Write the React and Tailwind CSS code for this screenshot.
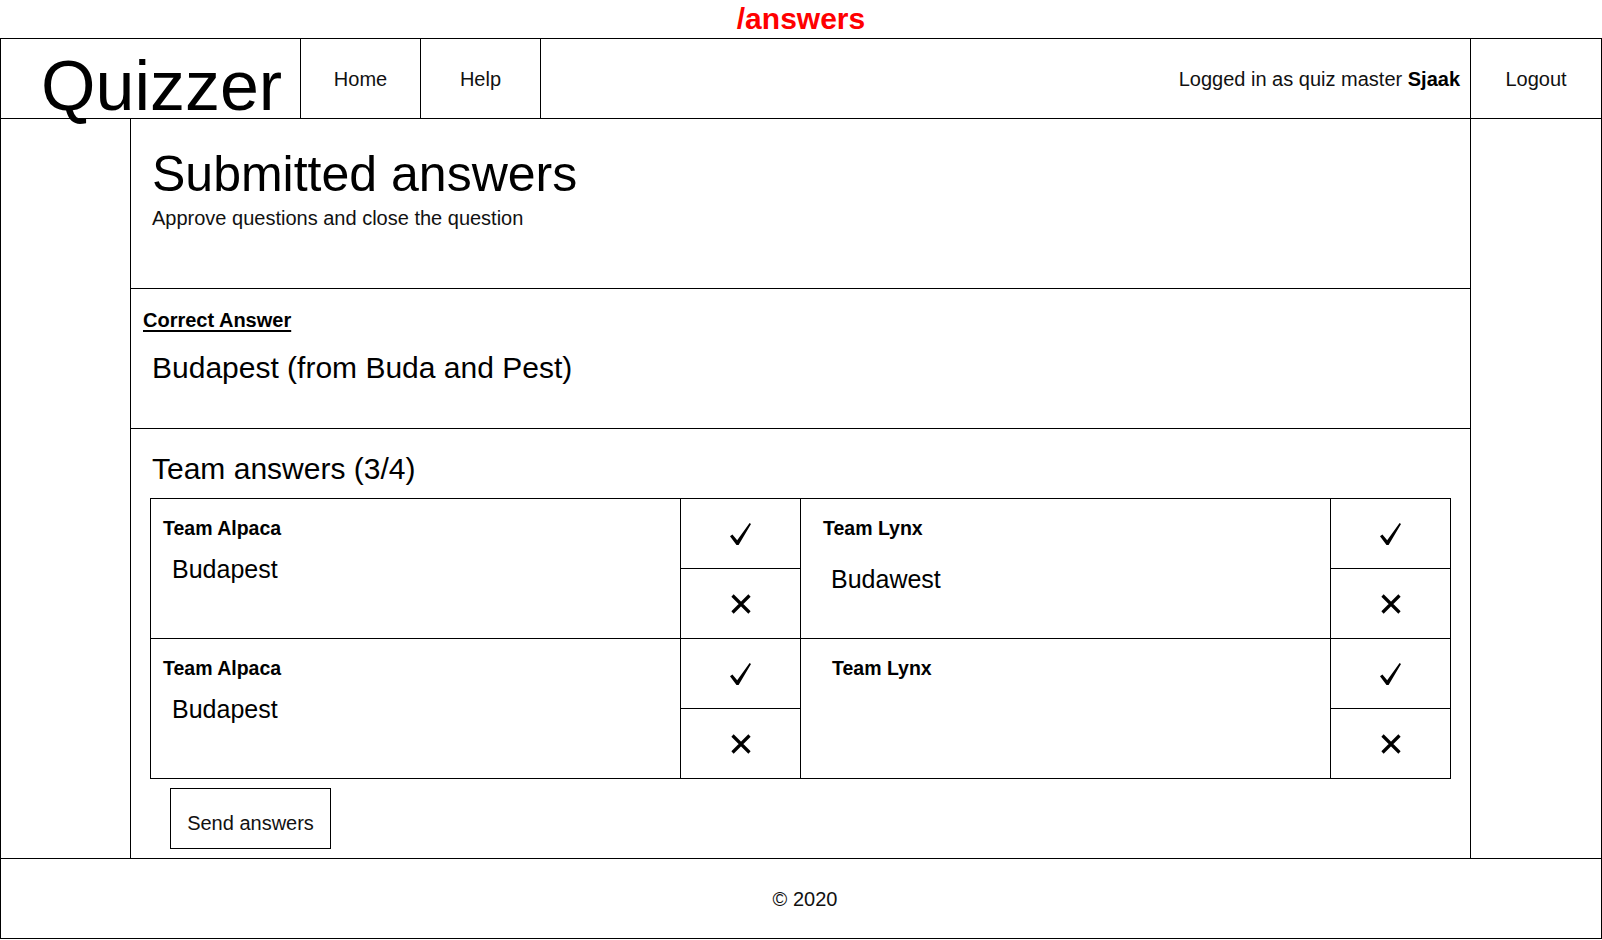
import React from "react";

const Check = () => (
  <svg width="21" height="22" viewBox="0 0 21 22">
    <path d="M0 13.3 L2.4 11.6 L7.2 17.2 L19.6 0 L21 0.9 L8.6 22 L6.5 22 Z" fill="#000" />
  </svg>
);

const Cross = () => (
  <svg width="20" height="20" viewBox="0 0 20 20">
    <path d="M1.5 1.5 L18.5 18.5 M18.5 1.5 L1.5 18.5" stroke="#000" strokeWidth="3.2" fill="none" />
  </svg>
);

const Buttons = () => (
  <div className="w-[120px] border-l border-black flex flex-col">
    <div className="h-[70px] border-b border-black flex items-center justify-center">
      <Check />
    </div>
    <div className="h-[69px] flex items-center justify-center">
      <Cross />
    </div>
  </div>
);

const AnswerCell = ({ team, answer, teamMl, answerMl, answerMt, left }) => (
  <div className={left ? "w-[529px] pt-[18px]" : "w-[530px] border-l border-black pt-[18px]"}>
    <div className={`${teamMl} text-[19.5px] leading-[23px] font-bold`}>{team}</div>
    {answer && (
      <div className={`${answerMl} ${answerMt} text-[25px] leading-[28px]`}>{answer}</div>
    )}
  </div>
);

const App = () => {
  return (
    <div className="w-[1602px] h-[940px] bg-white text-black font-['Liberation_Sans',Arial,sans-serif]">

      {/* ROUTE LABEL */}
      <div className="h-[38px] flex items-center justify-center text-[30px] leading-[38px] font-bold text-[#ff0000]">
        /answers
      </div>

      {/* HEADER */}
      <div className="h-[81px] border border-black flex">
        <div className="w-[300px] border-r border-black pl-[40px] pt-[12px]">
          <div className="text-[70px] leading-[70px] whitespace-nowrap">Quizzer</div>
        </div>
        <div className="w-[120px] border-r border-black flex items-center justify-center text-[20px] text-[#111]">Home</div>
        <div className="w-[120px] border-r border-black flex items-center justify-center text-[20px] text-[#111]">Help</div>
        <div className="flex-1 flex items-center justify-end pr-[10px] text-[20px] text-[#111]">
          Logged in as quiz master&nbsp;<span className="font-bold text-black">Sjaak</span>
        </div>
        <div className="w-[131px] border-l border-black flex items-center justify-center text-[20px] text-[#111]">Logout</div>
      </div>

      {/* MAIN */}
      <div className="h-[739px] border-x border-black flex">
        <div className="w-[130px] border-r border-black" />

        <div className="flex-1 flex flex-col">
          {/* TITLE */}
          <div className="h-[170px] border-b border-black pl-[21px] pt-[27px]">
            <h1 className="text-[50px] leading-[56px]">Submitted answers</h1>
            <p className="mt-[4px] text-[20px] leading-[24px] text-[#111]">Approve questions and close the question</p>
          </div>

          {/* CORRECT ANSWER */}
          <div className="h-[140px] border-b border-black pt-[19px]">
            <div className="pl-[12px] text-[20px] leading-[24px] font-bold underline underline-offset-[3px]">Correct Answer</div>
            <div className="pl-[21px] mt-[19px] text-[30px] leading-[34px]">Budapest (from Buda and Pest)</div>
          </div>

          {/* TEAM ANSWERS */}
          <div className="flex-1 pt-[23px]">
            <div className="pl-[21px] text-[30px] leading-[34px]">Team answers (3/4)</div>

            <div className="ml-[19px] mt-[12px] w-[1301px] border border-black">
              <div className="flex border-b border-black">
                <AnswerCell left team="Team Alpaca" answer="Budapest" teamMl="ml-[12px]" answerMl="ml-[21px]" answerMt="mt-[15px]" />
                <Buttons />
                <AnswerCell team="Team Lynx" answer="Budawest" teamMl="ml-[22px]" answerMl="ml-[30px]" answerMt="mt-[25px]" />
                <Buttons />
              </div>
              <div className="flex">
                <AnswerCell left team="Team Alpaca" answer="Budapest" teamMl="ml-[12px]" answerMl="ml-[21px]" answerMt="mt-[15px]" />
                <Buttons />
                <AnswerCell team="Team Lynx" teamMl="ml-[31px]" />
                <Buttons />
              </div>
            </div>

            <button className="ml-[39px] mt-[9px] w-[161px] h-[61px] pt-[8px] border border-black flex items-center justify-center text-[20px] text-[#111] bg-white">
              Send answers
            </button>
          </div>
        </div>

        <div className="w-[131px] border-l border-black" />
      </div>

      {/* FOOTER */}
      <div className="h-[81px] border border-black flex items-center justify-center pl-[8px] text-[20px] text-[#111]">
        © 2020
      </div>
    </div>
  );
};

export default App;
